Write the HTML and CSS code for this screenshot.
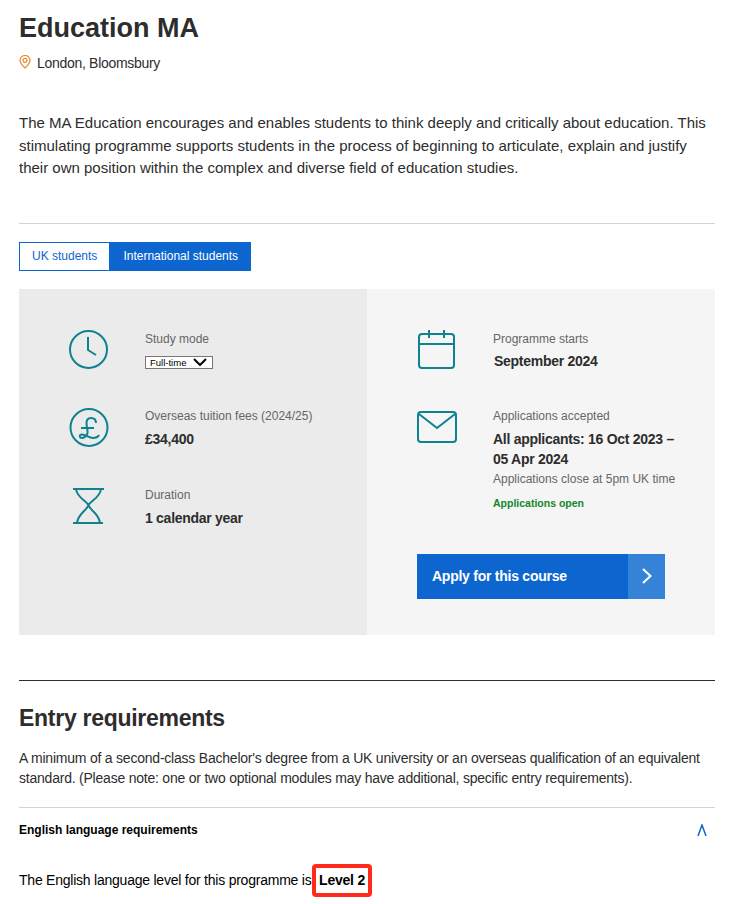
FILE: index.html
```html
<!DOCTYPE html>
<html lang="en">
<head>
  <meta charset="utf-8">
  <title>Education MA</title>
  <link rel="stylesheet" href="styles.css">
</head>
<body>
  <main class="page">
    <h1 class="title">Education MA</h1>
    <p class="location">
      <svg class="pin" viewBox="0 0 12 14" width="12" height="14" fill="none" stroke="#e8892b" stroke-width="1.200">
        <path d="M6 13C3.200 10.200 1 8 1 5.400A5 4.900 0 0 1 11 5.400C11 8 8.800 10.200 6 13Z"/>
        <circle cx="6" cy="5.300" r="2"/>
      </svg>
      London, Bloomsbury
    </p>
    <p class="intro">The MA Education encourages and enables students to think deeply and critically about education. This stimulating programme supports students in the process of beginning to articulate, explain and justify their own position within the complex and diverse field of education studies.</p>
    <hr class="rule">

    <div class="tabs">
      <a class="tab" href="#">UK students</a>
      <a class="tab tab-active" href="#">International students</a>
    </div>

    <section class="facts">
      <div class="facts-col facts-left">
        <div class="fact fact-mode">
          <svg class="icon" viewBox="0 0 40 40" fill="none">
            <circle cx="20.500" cy="20.500" r="18.500"/>
            <path d="M20 8V21L28 26"/>
          </svg>
          <div>
            <div class="label">Study mode</div>
            <div class="fake-select">Full-time
              <svg viewBox="0 0 14 8" width="14" height="8" fill="none" stroke="#000" stroke-width="2"><path d="M1 1L7 7L13 1"/></svg>
            </div>
          </div>
        </div>
        <div class="fact fact-fees">
          <svg class="icon" viewBox="0 0 40 40" fill="none">
            <circle cx="21" cy="21.500" r="18.500"/>
            <path d="M28 17C28 13 25 12 23 12C20 12 18.500 14 18.500 17C18.500 21 20 24 19.500 27C19 30 16 32 13.500 32C11.500 32 11 29 13.500 28.500C17 28 21 32 25 32C28 32 30 31 31 29M13 22H26"/>
          </svg>
          <div>
            <div class="label">Overseas tuition fees (2024/25)</div>
            <div class="value">£34,400</div>
          </div>
        </div>
        <div class="fact">
          <svg class="icon" viewBox="0 0 40 40" fill="none">
            <path d="M5 4H36M5 38H35M8 4C9 13 19 16 21 21C23 26 31 29 32 38M33 4C32 13 22 16 20 21C18 26 10 29 9 38"/>
          </svg>
          <div>
            <div class="label">Duration</div>
            <div class="value">1 calendar year</div>
          </div>
        </div>
      </div>

      <div class="facts-col facts-right">
        <div class="fact fact-starts">
          <svg class="icon" viewBox="0 0 40 40" fill="none">
            <rect x="2" y="5" width="35" height="34" rx="3"/>
            <path d="M2 15H37M12 1V9M27 1V9"/>
          </svg>
          <div>
            <div class="label">Programme starts</div>
            <div class="value value-starts">September 2024</div>
          </div>
        </div>
        <div class="fact">
          <svg class="icon" viewBox="0 0 40 40" fill="none">
            <rect x="1" y="6" width="38" height="30" rx="3"/>
            <path d="M2 8L20 22L38 8"/>
          </svg>
          <div>
            <div class="label">Applications accepted</div>
            <div class="value">All applicants: 16 Oct 2023 – 05 Apr 2024</div>
            <div class="note">Applications close at 5pm UK time</div>
            <div class="status">Applications open</div>
          </div>
        </div>
        <a class="apply" href="#">
          <span class="apply-text">Apply for this course</span>
          <span class="apply-arrow">
            <svg viewBox="0 0 10 16" width="10" height="16" fill="none" stroke="#fff" stroke-width="2"><path d="M1 1L8.500 8L1 15"/></svg>
          </span>
        </a>
      </div>
    </section>

    <hr class="rule-dark">
    <h2 class="entry-title">Entry requirements</h2>
    <p class="entry-text">A minimum of a second-class Bachelor's degree from a UK university or an overseas qualification of an equivalent standard. (Please note: one or two optional modules may have additional, specific entry requirements).</p>

    <div class="accordion">
      <div class="accordion-head">
        <strong>English language requirements</strong>
        <svg viewBox="0 0 10 12" width="10" height="12" fill="none" stroke="#0d66d0" stroke-width="1.500"><path d="M1 12L5 1L9 12"/></svg>
      </div>
      <p class="level">The English language level for this programme is <b class="level-mark">Level 2</b></p>
    </div>
  </main>
</body>
</html>
```

FILE: styles.css
```css
body {
  margin: 0;
  font-family: "Liberation Sans", Arial, sans-serif;
  color: #2d2d2d;
  background-color: #ffffff;
}

.page {
  width: 696px;
  margin-left: 19px;
  height: 904px;
  overflow: hidden;
}

.title {
  margin: 12px 0 0;
  font-size: 27px;
  line-height: 32px;
  font-weight: bold;
}

.location {
  display: flex;
  align-items: center;
  gap: 6px;
  margin: 9px 0 0;
  font-size: 14px;
  letter-spacing: -0.3px;
  line-height: 20px;
}

.pin {
  margin-bottom: 2px;
}

.intro {
  margin: 39.400px 0 0;
  font-size: 15px;
  line-height: 22.500px;
}

.rule {
  margin: 43px 0 0;
  border: 0;
  border-top: 1px solid #d4d4d4;
}

.tabs {
  display: flex;
  margin-top: 18px;
}

.tab {
  box-sizing: border-box;
  height: 29px;
  padding: 0 12px;
  border: 1px solid #0d66d0;
  font-size: 12px;
  line-height: 27px;
  color: #0d66d0;
  text-decoration: none;
}

.tab-active {
  background-color: #0d66d0;
  color: #ffffff;
}

.facts {
  display: flex;
  height: 346px;
  margin-top: 18px;
}

.facts-col {
  flex: 0 0 348px;
  box-sizing: border-box;
}

.facts-left {
  padding: 40px 0 0 49px;
  background-color: #ebebeb;
}

.facts-right {
  padding: 40px 30px 0 50px;
  background-color: #f5f5f5;
}

.fact {
  display: flex;
  gap: 37px;
}

.facts-right .fact {
  gap: 36px;
}

.fact-mode {
  height: 77px;
}

.fact-fees {
  height: 79px;
}

.fact-starts {
  height: 77px;
}

.icon {
  flex: none;
  width: 40px;
  height: 40px;
  overflow: visible;
  stroke: #0f8290;
  stroke-width: 2;
}

.label {
  font-size: 12px;
  line-height: 20px;
  color: #666666;
}

.value {
  margin-top: 3px;
  font-size: 14px;
  letter-spacing: -0.28px;
  line-height: 20px;
  font-weight: bold;
}

.value-starts {
  margin-top: 2px;
  margin-left: 1px;
}

.fake-select {
  display: inline-flex;
  align-items: center;
  gap: 7px;
  box-sizing: border-box;
  height: 13px;
  margin-top: 7px;
  padding: 0 0 0 4px;
  width: 68px;
  border: 1px solid #767676;
  background-color: #ffffff;
  font-size: 9.500px;
  color: #000000;
}

.note {
  margin-top: 1px;
  font-size: 12px;
  line-height: 18px;
  color: #666666;
}

.status {
  margin-top: 7px;
  font-size: 10.500px;
  line-height: 16px;
  font-weight: bold;
  color: #14862a;
}

.apply {
  display: flex;
  width: 248px;
  height: 45px;
  margin-top: 43px;
  background-color: #0d66d0;
  color: #ffffff;
  font-size: 14px;
  letter-spacing: -0.25px;
  font-weight: bold;
  text-decoration: none;
}

.apply-text {
  flex: 1;
  padding-left: 15px;
  line-height: 45px;
}

.apply-arrow {
  display: flex;
  align-items: center;
  justify-content: center;
  width: 37px;
  background-color: #3583d6;
}

.rule-dark {
  margin: 45px 0 0;
  border: 0;
  border-top: 1px solid #2d2d2d;
}

.entry-title {
  margin: 23px 0 0;
  font-size: 23px;
  letter-spacing: -0.28px;
  line-height: 28px;
  font-weight: bold;
}

.entry-text {
  margin: 16px 0 0;
  font-size: 14px;
  letter-spacing: -0.22px;
  line-height: 20px;
}

.accordion {
  margin-top: 19px;
  border-top: 1px solid #d4d4d4;
}

.accordion-head {
  display: flex;
  justify-content: space-between;
  align-items: center;
  height: 44px;
  padding-right: 8px;
  font-size: 12px;
  color: #000000;
}

.level {
  margin: 0;
  padding-top: 12px;
  font-size: 14px;
  letter-spacing: -0.23px;
  line-height: 25px;
  color: #000000;
}

.level-mark {
  display: inline-block;
  margin-left: -3px;
  padding: 0 3px;
  border: 4px solid #ff2a1c;
  border-radius: 4px;
  line-height: 25px;
}
```
